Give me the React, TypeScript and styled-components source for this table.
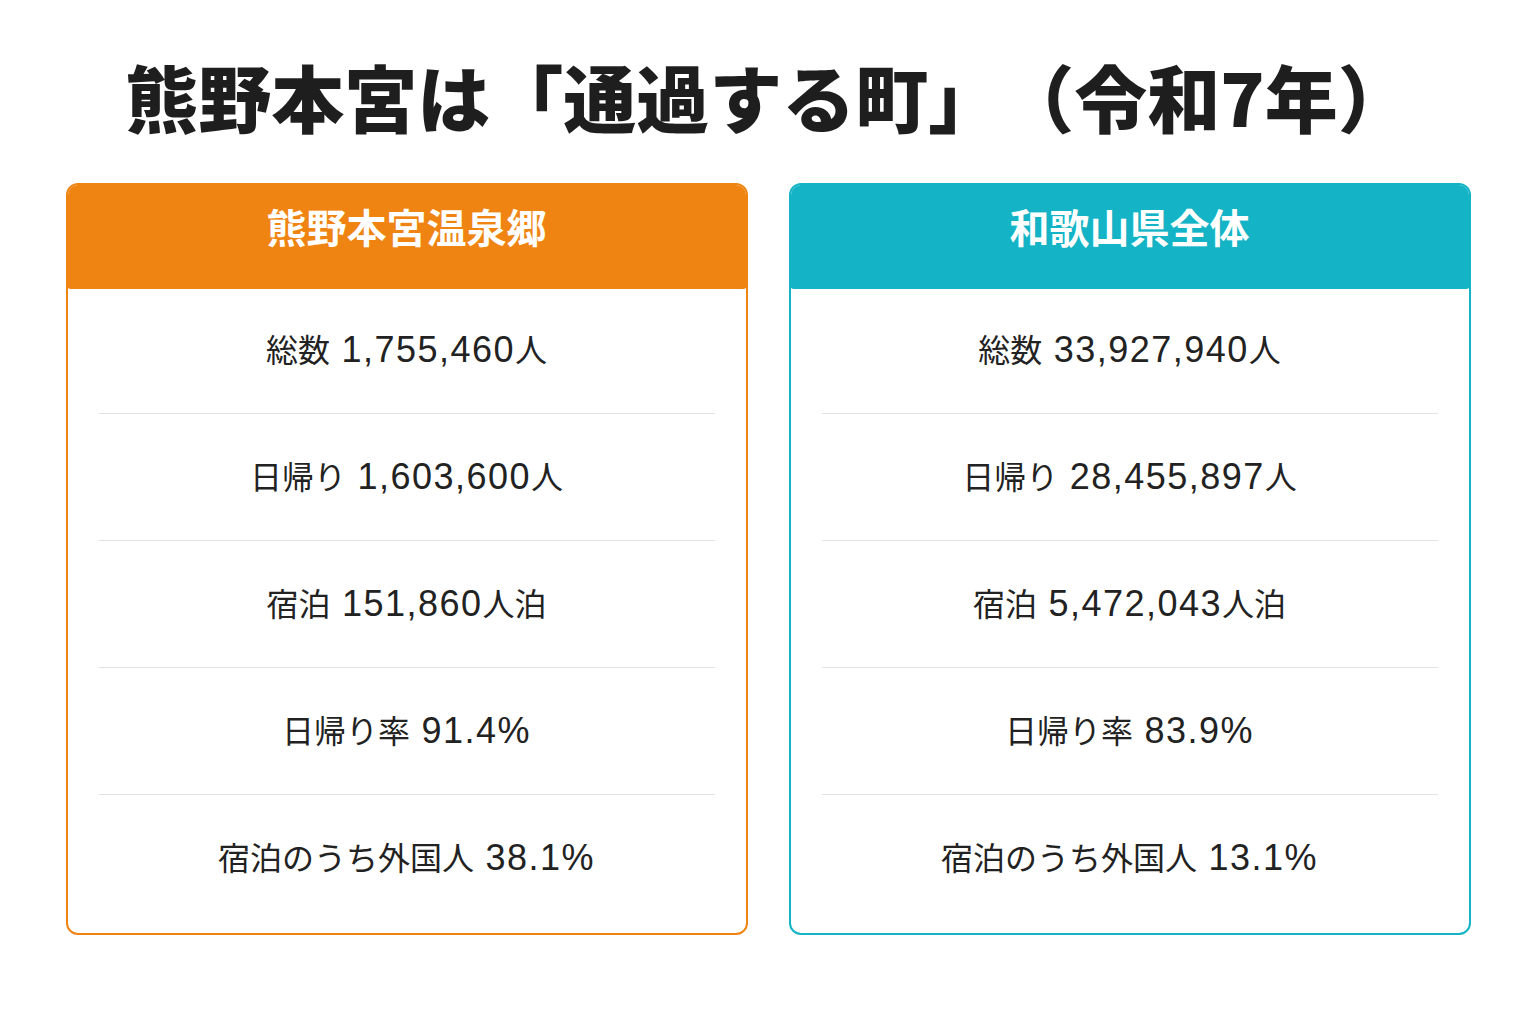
import React from 'react';
import styled, { createGlobalStyle } from 'styled-components';

interface Region {
  name: string;
  color: string;
  rows: string[];
}

const regions: Region[] = [
  {
    name: '熊野本宮温泉郷',
    color: '#ef8412',
    rows: [
      '総数 1,755,460人',
      '日帰り 1,603,600人',
      '宿泊 151,860人泊',
      '日帰り率 91.4%',
      '宿泊のうち外国人 38.1%',
    ],
  },
  {
    name: '和歌山県全体',
    color: '#14b4c6',
    rows: [
      '総数 33,927,940人',
      '日帰り 28,455,897人',
      '宿泊 5,472,043人泊',
      '日帰り率 83.9%',
      '宿泊のうち外国人 13.1%',
    ],
  },
];

// latin parts (digits, commas, %) are set in a wider face than the kanji
const renderRow = (text: string) =>
  text.split(/( ?[0-9.,%]+)/).map((part, i) =>
    /[0-9]/.test(part) ? <Num key={i}>{part}</Num> : part
  );

const App: React.FC = () => (
  <Page>
    <GlobalStyle />
    <Title>熊野本宮は「通過する町」（令和7年）</Title>
    <Cards>
      {regions.map((r) => (
        <Card key={r.name} $color={r.color}>
          <Header $color={r.color}>{r.name}</Header>
          <Body>
            {r.rows.map((row) => (
              <Row key={row}>
                <Line>{renderRow(row)}</Line>
              </Row>
            ))}
          </Body>
        </Card>
      ))}
    </Cards>
  </Page>
);

export default App;

const GlobalStyle = createGlobalStyle`
  body {
    margin: 0;
    background: #ffffff;
    font-family: 'Noto Sans CJK JP', 'Noto Sans', sans-serif;
    text-spacing-trim: space-all;
  }
`;

const Page = styled.main`
  width: 1536px;
  height: 1024px;
  padding-top: 42px;
  box-sizing: border-box;
  display: flex;
  flex-direction: column;
  align-items: center;
`;

const Title = styled.h1`
  margin: 0 0 35px;
  font-size: 73px;
  line-height: 106px;
  font-weight: 900;
  color: #1e1e1e;
  text-spacing-trim: space-all;
`;

const Cards = styled.div`
  display: grid;
  grid-template-columns: 682px 682px;
  gap: 41px;
`;

const Card = styled.section<{ $color: string }>`
  border: 2px solid ${(p) => p.$color};
  border-radius: 12px;
  overflow: hidden;
  background: #fff;
`;

const Header = styled.h2<{ $color: string }>`
  margin: -2px -2px 0;
  height: 106px;
  box-sizing: border-box;
  padding-bottom: 20px;
  display: flex;
  align-items: center;
  justify-content: center;
  background: ${(p) => p.$color};
  color: #fff;
  font-size: 40px;
  font-weight: 700;
  border-radius: 12px 12px 5px 5px;
`;

const Body = styled.div`
  margin-top: -2px;
  padding: 0 31px 11px;
`;

const Row = styled.div`
  height: 127px;
  box-sizing: border-box;
  padding-bottom: 3px;
  display: flex;
  align-items: center;
  justify-content: center;
  border-bottom: 1px solid #e0e3e6;

  &:last-child {
    border-bottom: none;
  }
`;

const Line = styled.p`
  margin: 0;
  font-size: 32px;
  line-height: 40px;
  color: #222;
  white-space: pre;
`;

const Num = styled.span`
  font-family: 'Liberation Sans', Arial, sans-serif;
  font-size: 36px;
  letter-spacing: 1.5px;
`;
